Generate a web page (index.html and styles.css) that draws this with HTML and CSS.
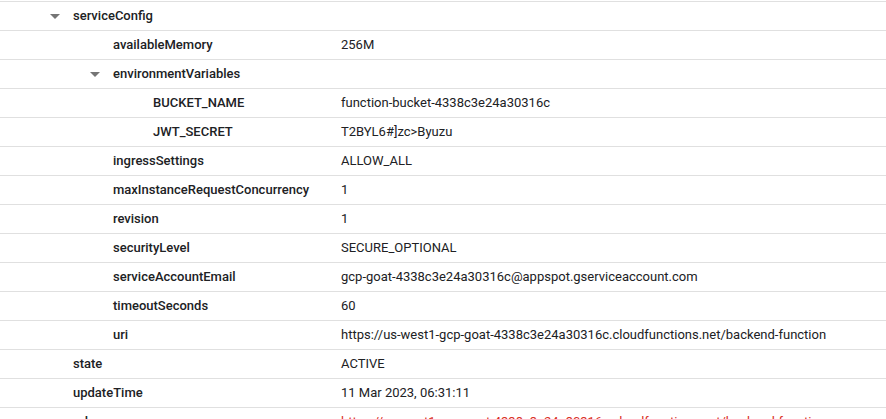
FILE: index.html
```html
<!DOCTYPE html>
<html>
<head>
<meta charset="utf-8">
<link rel="stylesheet" href="styles.css">
</head>
<body>
<div class="tree">
  <div class="row"><div class="key l0"><span class="tog"><svg viewBox="0 0 24 24" width="24" height="24"><path d="M7 10l5 5 5-5z"/></svg></span><span class="name">serviceConfig</span></div><div class="val"></div></div>
  <div class="row"><div class="key l1"><span class="tog"></span><span class="name">availableMemory</span></div><div class="val">256M</div></div>
  <div class="row"><div class="key l1"><span class="tog"><svg viewBox="0 0 24 24" width="24" height="24"><path d="M7 10l5 5 5-5z"/></svg></span><span class="name">environmentVariables</span></div><div class="val"></div></div>
  <div class="row"><div class="key l2"><span class="tog"></span><span class="name">BUCKET_NAME</span></div><div class="val">function-bucket-4338c3e24a30316c</div></div>
  <div class="row"><div class="key l2"><span class="tog"></span><span class="name">JWT_SECRET</span></div><div class="val">T2BYL6#]zc&gt;Byuzu</div></div>
  <div class="row"><div class="key l1"><span class="tog"></span><span class="name">ingressSettings</span></div><div class="val">ALLOW_ALL</div></div>
  <div class="row"><div class="key l1"><span class="tog"></span><span class="name">maxInstanceRequestConcurrency</span></div><div class="val">1</div></div>
  <div class="row"><div class="key l1"><span class="tog"></span><span class="name">revision</span></div><div class="val">1</div></div>
  <div class="row"><div class="key l1"><span class="tog"></span><span class="name">securityLevel</span></div><div class="val">SECURE_OPTIONAL</div></div>
  <div class="row"><div class="key l1"><span class="tog"></span><span class="name">serviceAccountEmail</span></div><div class="val">gcp-goat-4338c3e24a30316c@appspot.gserviceaccount.com</div></div>
  <div class="row"><div class="key l1"><span class="tog"></span><span class="name">timeoutSeconds</span></div><div class="val">60</div></div>
  <div class="row"><div class="key l1"><span class="tog"></span><span class="name">uri</span></div><div class="val">https://us-west1-gcp-goat-4338c3e24a30316c.cloudfunctions.net/backend-function</div></div>
  <div class="row"><div class="key l0"><span class="tog"></span><span class="name">state</span></div><div class="val">ACTIVE</div></div>
  <div class="row"><div class="key l0"><span class="tog"></span><span class="name">updateTime</span></div><div class="val">11 Mar 2023, 06:31:11</div></div>
  <div class="row"><div class="key l0"><span class="tog"></span><span class="name">url</span></div><div class="val link">https://us-west1-gcp-goat-4338c3e24a30316c.cloudfunctions.net/backend-function</div></div>
</div>
</body>
</html>
```
FILE: styles.css
```css
html, body {
  margin: 0;
  padding: 0;
  background: #ffffff;
  overflow: hidden;
}
body {
  font-family: Roboto, "Liberation Sans", Arial, sans-serif;
  font-size: 13px;
  color: #202124;
}
.tree {
  padding-top: 1px;
}
.row {
  display: grid;
  grid-template-columns: 341px 1fr;
  height: 27px;
  padding-bottom: 1px;
  border-top: 1px solid #e0e0e0;
  align-items: center;
}
.key {
  display: flex;
  align-items: center;
  font-weight: 500;
  color: #202124;
  white-space: nowrap;
}
.l0 { padding-left: 43px; }
.l1 { padding-left: 83px; }
.l2 { padding-left: 123px; }
.tog {
  width: 24px;
  height: 24px;
  margin-right: 6px;
  flex: none;
  display: flex;
}
.tog svg {
  fill: #757575;
}
.val {
  white-space: nowrap;
}
.link {
  color: #d93025;
}
```
